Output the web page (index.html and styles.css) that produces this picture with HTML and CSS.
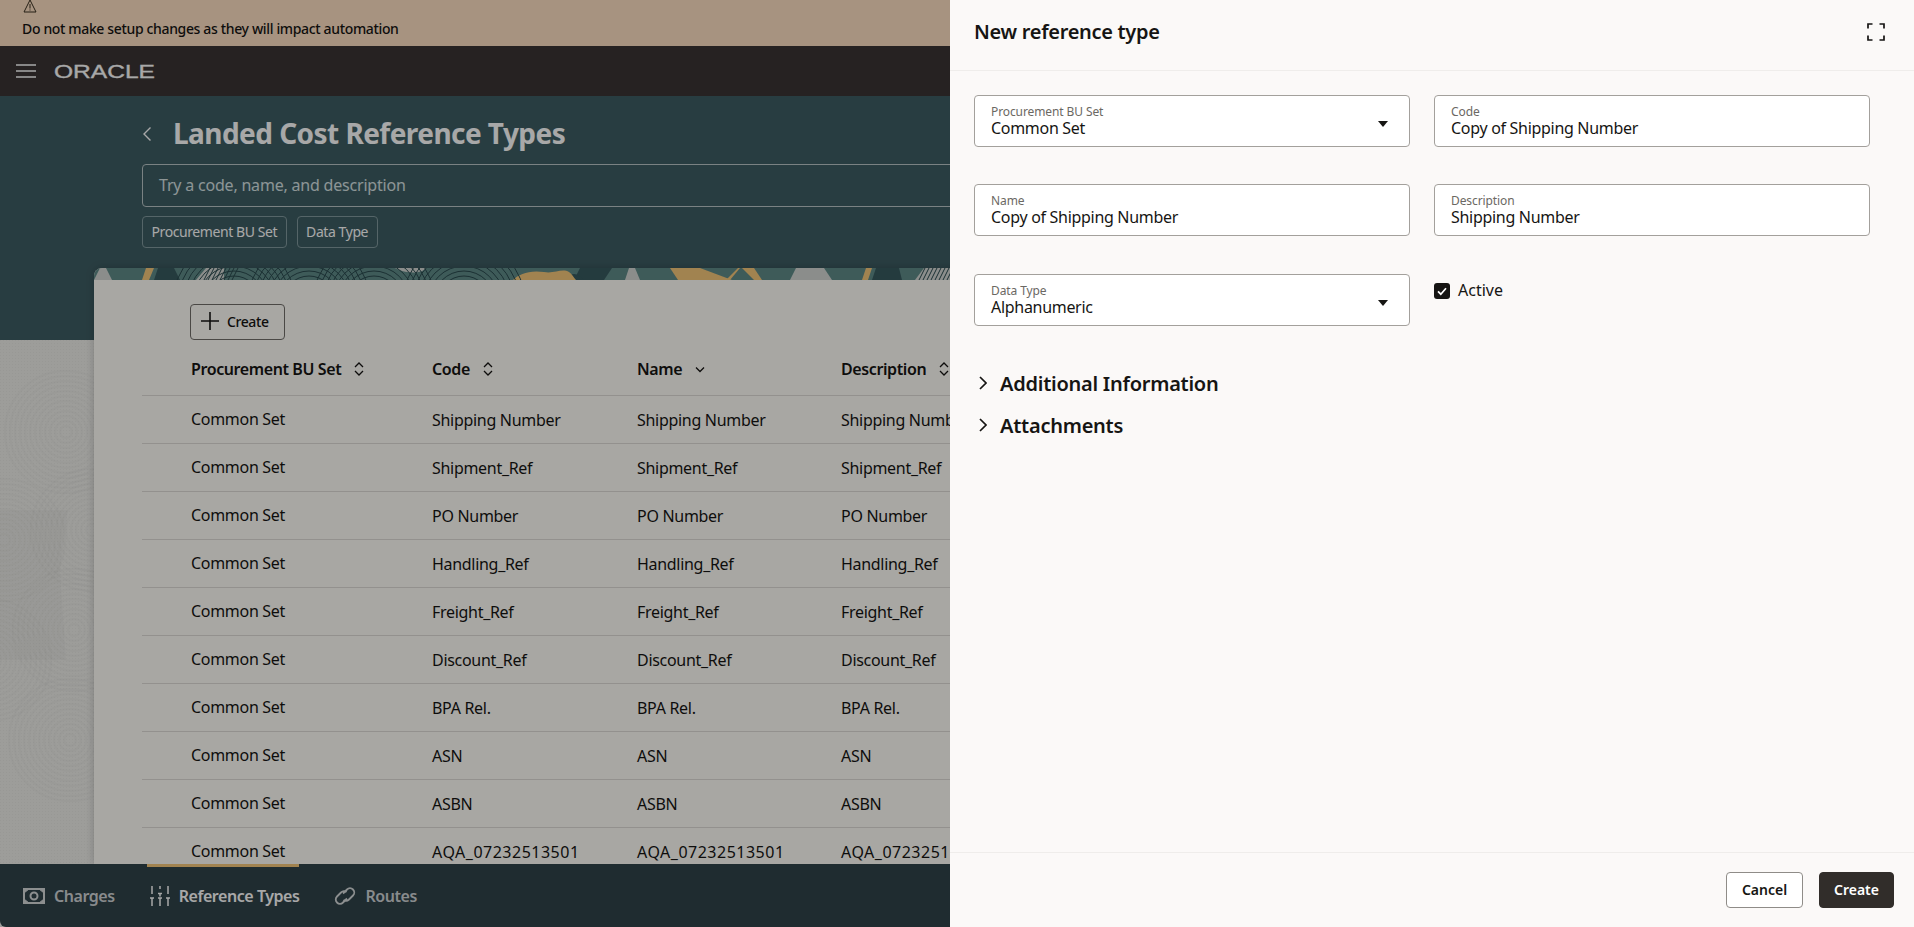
FILE: index.html
```html
<!DOCTYPE html>
<html lang="en">
<head>
<meta charset="utf-8">
<title>Landed Cost Reference Types</title>
<link rel="stylesheet" href="styles.css">
</head>
<body>
<svg class="defs" width="0" height="0" aria-hidden="true">
  <defs>
    <g id="arcs" fill="none">
      <circle r="6"/><circle r="11"/><circle r="16"/><circle r="21"/><circle r="26"/><circle r="31"/><circle r="36"/><circle r="41"/><circle r="46"/><circle r="51"/><circle r="56"/><circle r="61"/>
    </g>
    <g id="hatch" fill="none">
      <path d="M0 12L6 0M4 12L10 0M8 12L14 0M12 12L18 0M16 12L22 0M20 12L26 0M24 12L30 0M28 12L34 0"/>
    </g>
    <pattern id="dots" width="3" height="3" patternUnits="userSpaceOnUse"><rect width="1" height="1" fill="#000" fill-opacity=".03"/></pattern>
  </defs>
</svg>

<div class="banner">
  <svg class="warn-icon" width="14" height="14" viewBox="0 0 14 14"><path d="M7 1L13 13H1Z" fill="none" stroke="#3a3020" stroke-width="1"/><path d="M7 5v4.500M7 10.500v1" stroke="#3a3020" stroke-width="1"/></svg>
  <div class="banner-text">Do not make setup changes as they will impact automation</div>
</div>

<header class="topbar">
  <svg class="burger" width="20" height="14" viewBox="0 0 20 14"><path d="M0 1h20M0 7h20M0 13h20" stroke="#fff" stroke-width="1.600"/></svg>
  <svg class="logo" width="106" height="24" viewBox="0 0 106 24"><text x="0" y="18.500" textLength="101" lengthAdjust="spacingAndGlyphs">ORACLE</text></svg>
</header>

<main class="main">
  <svg class="pattern" width="94" height="524" viewBox="0 0 94 524" aria-hidden="true">
    <rect width="94" height="524" fill="url(#dots)"/>
    <path d="M0 170H68L60 230L66 320H0Z" fill="#000" fill-opacity=".02"/>
    <use href="#arcs" x="66" y="92"/>
    <use href="#arcs" x="4" y="200"/>
    <use href="#arcs" x="74" y="290"/>
    <use href="#arcs" x="92" y="190"/>
    <use href="#arcs" x="-10" y="320"/>
    <use href="#arcs" x="70" y="400"/>
  </svg>

  <div class="hero">
    <div class="title-row">
      <svg class="back" width="10" height="16" viewBox="0 0 10 16"><path d="M8.500 1.500L2 8l6.500 6.500" fill="none" stroke="#fff" stroke-width="1.400"/></svg>
      <h1 class="title">Landed Cost Reference Types</h1>
    </div>
    <div class="search">Try a code, name, and description</div>
    <div class="chips">
      <span class="chip">Procurement BU Set</span>
      <span class="chip">Data Type</span>
    </div>
  </div>

  <section class="card">
    <svg class="strip" width="1720" height="12" viewBox="0 0 1720 12" preserveAspectRatio="xMinYMin" aria-hidden="true">
      <rect width="1720" height="12" fill="#5f8a88"/>
      <g class="s-gray">
        <path d="M0 12L6 0H12L18 12Z"/>
        <path d="M102 12L112 0H130V12Z"/>
        <path d="M301 0H332C328 6 312 6 301 0Z"/>
        <path d="M531 12L535 0H541L546 12Z"/>
        <path d="M696 12L702 0H730L738 12Z"/>
        <path d="M821 12L830 0H856V12Z"/>
      </g>
      <g class="s-dark">
        <path d="M60 12L64 0H80L86 12Z"/>
        <path d="M486 0H518L510 12H480Z"/>
        <path d="M778 12L782 0H805L808 12Z"/>
        <path d="M470 12C476 4 484 4 490 12Z"/>
      </g>
      <g class="s-gold">
        <path d="M48 12L52 0H60L55 12Z"/>
        <path d="M419 12C425 6 435 2 450 4C460 6 468 0 475 4C478 6 480 10 482 12Z"/>
        <path d="M576 0H606L638 12H584Z"/>
        <path d="M632 12L644 0H646L636 12Z"/>
        <path d="M648 0H660L668 12H660Z"/>
        <path d="M768 12L772 0H778L774 12Z"/>
      </g>
      <g class="s-line">
        <use href="#hatch" x="110"/>
        <use href="#arcs" x="140" y="34"/>
        <use href="#arcs" x="215" y="34"/>
        <use href="#arcs" x="280" y="34"/>
        <use href="#arcs" x="370" y="34"/>
        <use href="#hatch" x="825"/>
      </g>
    </svg>
    <div class="card-body">
      <button class="btn-add" type="button">
        <svg width="18" height="18" viewBox="0 0 18 18"><path d="M9 0v18M0 9h18" stroke="#161513" stroke-width="1.600"/></svg>
        <span>Create</span>
      </button>
      <div class="table">
        <div class="row head">
          <div class="cell"><span>Procurement BU Set</span><svg class="sort" width="10" height="16" viewBox="0 0 10 16"><path d="M1 6l4-4 4 4M1 10l4 4 4-4" fill="none" stroke="#161513" stroke-width="1.300"/></svg></div>
          <div class="cell"><span>Code</span><svg class="sort" width="10" height="16" viewBox="0 0 10 16"><path d="M1 6l4-4 4 4M1 10l4 4 4-4" fill="none" stroke="#161513" stroke-width="1.300"/></svg></div>
          <div class="cell"><span>Name</span><svg class="sort down" width="10" height="16" viewBox="0 0 10 16"><path d="M1 6.500l4 4 4-4" fill="none" stroke="#161513" stroke-width="1.300"/></svg></div>
          <div class="cell"><span>Description</span><svg class="sort" width="10" height="16" viewBox="0 0 10 16"><path d="M1 6l4-4 4 4M1 10l4 4 4-4" fill="none" stroke="#161513" stroke-width="1.300"/></svg></div>
        </div>
        <div class="row"><div class="cell lead">Common Set</div><div class="cell">Shipping Number</div><div class="cell">Shipping Number</div><div class="cell">Shipping Number</div></div>
        <div class="row"><div class="cell lead">Common Set</div><div class="cell">Shipment_Ref</div><div class="cell">Shipment_Ref</div><div class="cell">Shipment_Ref</div></div>
        <div class="row"><div class="cell lead">Common Set</div><div class="cell">PO Number</div><div class="cell">PO Number</div><div class="cell">PO Number</div></div>
        <div class="row"><div class="cell lead">Common Set</div><div class="cell">Handling_Ref</div><div class="cell">Handling_Ref</div><div class="cell">Handling_Ref</div></div>
        <div class="row"><div class="cell lead">Common Set</div><div class="cell">Freight_Ref</div><div class="cell">Freight_Ref</div><div class="cell">Freight_Ref</div></div>
        <div class="row"><div class="cell lead">Common Set</div><div class="cell">Discount_Ref</div><div class="cell">Discount_Ref</div><div class="cell">Discount_Ref</div></div>
        <div class="row"><div class="cell lead">Common Set</div><div class="cell">BPA Rel.</div><div class="cell">BPA Rel.</div><div class="cell">BPA Rel.</div></div>
        <div class="row"><div class="cell lead">Common Set</div><div class="cell">ASN</div><div class="cell">ASN</div><div class="cell">ASN</div></div>
        <div class="row"><div class="cell lead">Common Set</div><div class="cell">ASBN</div><div class="cell">ASBN</div><div class="cell">ASBN</div></div>
        <div class="row"><div class="cell lead">Common Set</div><div class="cell code">AQA_07232513501</div><div class="cell code">AQA_07232513501</div><div class="cell code">AQA_07232513501</div></div>
      </div>
    </div>
  </section>
</main>

<nav class="tabbar">
  <a class="tab">
    <svg width="22" height="16" viewBox="0 0 22 16"><path d="M1 1h20v14H1z" fill="none" stroke="#fff" stroke-width="2"/><path d="M1 1h5l-5 4zM21 1h-5l5 4zM1 15h5l-5-4zM21 15h-5l5-4z" fill="#fff" stroke="#fff"/><circle cx="11" cy="8" r="3.500" fill="none" stroke="#fff" stroke-width="2"/></svg>
    <span>Charges</span>
  </a>
  <a class="tab active">
    <svg width="20" height="20" viewBox="0 0 20 20"><path d="M2 0v8M0 12h4M2 12v8M10 0v3M8 7.500h4M10 7.500v3M10 12v8M8 12h4M18 0v8M16 12h4M18 12v8" fill="none" stroke="#fff" stroke-width="1.500"/></svg>
    <span>Reference Types</span>
  </a>
  <a class="tab">
    <svg width="22" height="22" viewBox="0 0 22 22"><path d="M9 8.500L13 4.500a4.200 4.200 0 0 1 6 6L15 14.500a4.200 4.200 0 0 1-5.500.400" fill="none" stroke="#fff" stroke-width="1.800"/><path d="M13 13.500L9 17.500a4.200 4.200 0 0 1-6-6L7 7.500a4.200 4.200 0 0 1 5.500-.400" fill="none" stroke="#fff" stroke-width="1.800"/></svg>
    <span>Routes</span>
  </a>
</nav>

<div class="scrim"></div>

<aside class="drawer">
  <div class="drawer-head">
    <h2 class="drawer-title">New reference type</h2>
    <svg class="expand" width="18" height="18" viewBox="0 0 18 18"><path d="M1 5.500V1h4.500M12.500 1H17v4.500M1 12.500V17h4.500M12.500 17H17v-4.500" fill="none" stroke="#161513" stroke-width="1.700"/></svg>
  </div>
  <div class="drawer-body">
    <div class="form">
      <div class="field select"><div><div class="label">Procurement BU Set</div><div class="value">Common Set</div></div><span class="caret"></span></div>
      <div class="field"><div><div class="label">Code</div><div class="value">Copy of Shipping Number</div></div></div>
      <div class="field"><div><div class="label">Name</div><div class="value">Copy of Shipping Number</div></div></div>
      <div class="field"><div><div class="label">Description</div><div class="value">Shipping Number</div></div></div>
      <div class="field select low"><div><div class="label">Data Type</div><div class="value">Alphanumeric</div></div><span class="caret"></span></div>
      <label class="check low">
        <span class="box"><svg width="16" height="16" viewBox="0 0 16 16"><path d="M4 8.300l2.800 2.900L12 5.200" fill="none" stroke="#fff" stroke-width="1.700"/></svg></span>
        <span>Active</span>
      </label>
    </div>
    <div class="section"><svg width="8" height="14" viewBox="0 0 8 14"><path d="M1 1l6 6-6 6" fill="none" stroke="#161513" stroke-width="1.700"/></svg><h3>Additional Information</h3></div>
    <div class="section"><svg width="8" height="14" viewBox="0 0 8 14"><path d="M1 1l6 6-6 6" fill="none" stroke="#161513" stroke-width="1.700"/></svg><h3>Attachments</h3></div>
  </div>
  <div class="drawer-foot">
    <button class="btn" type="button">Cancel</button>
    <button class="btn primary" type="button">Create</button>
  </div>
</aside>
</body>
</html>
```

FILE: styles.css
```css
* { box-sizing: border-box; }
html, body { margin: 0; height: 100%; }
body {
  width: 1914px;
  height: 927px;
  position: relative;
  overflow: hidden;
  display: flex;
  flex-direction: column;
  font-family: "Noto Sans", "Open Sans", sans-serif;
  font-size: 16px;
  color: #161513;
  background: #eeeeea;
}
.defs { position: absolute; }

/* Banner */
.banner { height: 46px; flex: none; background: #fee0c3; padding-left: 22px; position: relative; }
.warn-icon { display: block; margin-left: 1px; height: 14px; margin-top: -1px; }
.banner-text { font-size: 14px; font-weight: 500; line-height: 20px; margin-top: 6px; letter-spacing: -.35px; }

/* Top bar */
.topbar { height: 50px; flex: none; background: #3a3534; display: flex; align-items: center; padding-left: 16px; }
.burger { margin-right: 18px; }
.logo text { font-family: "Liberation Sans", sans-serif; font-size: 18px; fill: #fff; stroke: #fff; stroke-width: .3px; }

/* Main */
.main {
  flex: 1;
  min-height: 0;
  position: relative;
  display: flex;
  flex-direction: column;
  background: linear-gradient(#3e5d63 244px, #eeeeea 244px);
}
.pattern { position: absolute; left: 0; top: 244px; }
.pattern use { stroke: #000; stroke-opacity: .016; stroke-width: 2.500; }
.hero { flex: none; padding: 20px 0 0 142px; position: relative; }
.title-row { height: 36px; display: flex; align-items: center; }
.back { margin-right: 21px; }
.title { margin: 0; font-size: 28px; font-weight: 700; line-height: 34px; height: 36px; letter-spacing: -.55px; color: #fff; }
.search {
  margin-top: 12px;
  height: 43px;
  width: 1630px;
  border: 1px solid #b9c5c7;
  border-radius: 4px;
  padding: 0 0 2px 16px;
  display: flex;
  align-items: center;
  letter-spacing: -.2px;
  color: #d6e2e3;
}
.chips { margin-top: 9px; display: flex; gap: 10px; }
.chip {
  height: 32px;
  padding: 0 8.500px 2px;
  border: 1px solid #829a9e;
  border-radius: 4px;
  display: flex;
  align-items: center;
  font-size: 14px;
  letter-spacing: -.42px;
  color: #fff;
}

/* Card */
.card {
  flex: 1;
  min-height: 0;
  margin: 20px 0 0 94px;
  width: 1726px;
  overflow: hidden;
  border-radius: 8px 8px 0 0;
  position: relative;
  box-shadow: 0 0 8px rgba(0, 0, 0, .2);
  background: #fffdf8;
}
.strip { display: block; }
.s-gray path { fill: #d3d7d4; }
.s-dark path { fill: #375a5e; }
.s-gold path { fill: #f5c77a; }
.s-line use { stroke: #2a4a4e; stroke-width: 1; }
.card-body { padding: 24px 0 0 48px; }
.btn-add {
  margin-left: 48px;
  height: 36px;
  width: 95px;
  border: 1px solid #716e6a;
  border-radius: 4px;
  background: transparent;
  display: flex;
  align-items: center;
  gap: 8px;
  padding: 0 0 2px 10px;
  font: 500 14px "Noto Sans", sans-serif;
  letter-spacing: -.4px;
  color: #161513;
}
.row {
  display: grid;
  grid-template-columns: 290px 205px 204px 1fr;
  height: 48px;
  align-items: center;
  border-bottom: 1px solid #dfdcd8;
  white-space: nowrap;
  letter-spacing: -.3px;
}
.cell:first-child { padding-left: 49px; }
.row.head { height: 56px; font-weight: 600; padding-top: 2px; letter-spacing: -.4px; }
.head .cell { display: flex; align-items: center; }
.sort { margin-left: 13px; }
.sort.down { margin-left: 13px; }
.lead { padding-bottom: 2px; }
.cell.code { letter-spacing: .5px; }

/* Tab bar */
.tabbar {
  height: 63px;
  flex: none;
  background: #2f4349;
  display: flex;
  padding-left: 23px;
  gap: 35px;
  position: relative;
  border-bottom-left-radius: 6px;
  letter-spacing: -.45px;
}
.tab {
  display: flex;
  align-items: center;
  gap: 9px;
  height: 63px;
  font-weight: 600;
  color: #cfd4d6;
  position: relative;
}
.tab.active { color: #fff; }
.tab svg { opacity: .8; }
.tab.active svg { opacity: 1; }
.tab.active::before {
  content: "";
  position: absolute;
  left: -3px;
  right: 0;
  top: 0;
  height: 3px;
  background: #f5c77a;
}

/* Scrim */
.scrim { position: absolute; inset: 0; background: rgba(0, 0, 0, .34); }

/* Drawer */
.drawer {
  position: absolute;
  top: 0;
  right: 0;
  bottom: 0;
  width: 964px;
  background: #fbf9f8;
  display: flex;
  flex-direction: column;
}
.drawer-head {
  height: 71px;
  flex: none;
  display: flex;
  align-items: center;
  justify-content: space-between;
  padding: 0 29px 7px 24px;
  border-bottom: 1px solid #efedeb;
}
.drawer-title { margin: 0; font-size: 20px; font-weight: 600; line-height: 28px; letter-spacing: -.3px; }
.drawer-body { flex: 1; padding: 24px 44px 0 24px; }
.form { display: grid; grid-template-columns: 436px 436px; column-gap: 24px; row-gap: 37px; margin-bottom: 36px; }
.low { margin-top: 1px; }
.field {
  height: 52px;
  background: #fff;
  border: 1px solid #a3a09c;
  border-radius: 4px;
  padding: 8px 16px 0;
  display: flex;
  justify-content: space-between;
}
.label { font-size: 12px; line-height: 16px; color: #6b6863; letter-spacing: -.1px; }
.value { font-size: 16px; line-height: 18px; margin-top: -1px; letter-spacing: -.3px; }
.caret { width: 0; height: 0; margin: 17px 5px 0 0; border: 5px solid transparent; border-top: 6px solid #161513; border-bottom: 0; }
.check { display: flex; align-items: flex-start; gap: 8px; line-height: 32px; }
.check .box { width: 16px; height: 16px; margin-top: 9px; border-radius: 3px; background: #161513; display: block; }
.check .box svg { display: block; }
.section { height: 42px; display: flex; align-items: center; gap: 13px; padding-left: 5px; }
.section h3 { margin: 0; font-size: 20px; font-weight: 600; letter-spacing: -.25px; }
.drawer-foot {
  height: 75px;
  flex: none;
  border-top: 1px solid #efedeb;
  display: flex;
  justify-content: flex-end;
  gap: 16px;
  padding: 19px 20px 0 0;
}
.btn {
  height: 36px;
  border: 1px solid #8f8c88;
  border-radius: 4px;
  background: #fff;
  font: 600 14px "Noto Sans", sans-serif;
  color: #161513;
  width: 77px;
  padding-bottom: 2px;
}
.btn.primary { background: #312d2a; border-color: #312d2a; color: #fff; width: 75px; }
```
